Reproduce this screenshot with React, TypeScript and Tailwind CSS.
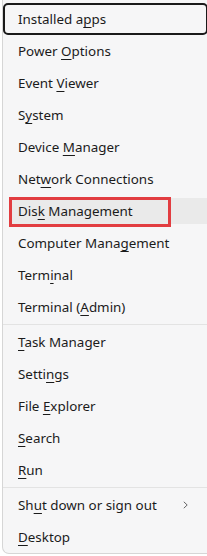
import type { ReactNode } from "react"

type Item = { pre: string; key: string; post: string; chevron?: boolean }

const groupA: Item[] = [
    { pre: "Installed a", key: "p", post: "ps" },
    { pre: "Power ", key: "O", post: "ptions" },
    { pre: "Event ", key: "V", post: "iewer" },
    { pre: "S", key: "y", post: "stem" },
    { pre: "Device ", key: "M", post: "anager" },
    { pre: "Net", key: "w", post: "ork Connections" },
    { pre: "Dis", key: "k", post: " Management" },
    { pre: "Computer Mana", key: "g", post: "ement" },
    { pre: "Term", key: "i", post: "nal" },
    { pre: "Terminal (", key: "A", post: "dmin)" },
]

const groupB: Item[] = [
    { pre: "", key: "T", post: "ask Manager" },
    { pre: "Setti", key: "n", post: "gs" },
    { pre: "File ", key: "E", post: "xplorer" },
    { pre: "", key: "S", post: "earch" },
    { pre: "", key: "R", post: "un" },
]

const groupC: Item[] = [
    { pre: "Sh", key: "u", post: "t down or sign out", chevron: true },
    { pre: "", key: "D", post: "esktop" },
]

function Label({ item }: { item: Item }) {
    return (
        <span className="whitespace-nowrap">
            {item.pre}
            <u className="underline decoration-1 underline-offset-[3px]">{item.key}</u>
            {item.post}
        </span>
    )
}

function Row({ item, focused, hovered }: { item: Item; focused?: boolean; hovered?: boolean }) {
    let inner: ReactNode = <Label item={item} />
    if (focused) {
        return (
            <div className="h-[32px] mr-[2px] flex items-center pl-[13px] rounded-[5px] border-2 border-[#1a1a1a]">
                {inner}
            </div>
        )
    }
    return (
        <div className="h-[32px] py-[3px] pl-[6px]">
            <div className={`h-full flex items-center pl-[9px] pr-[22px] rounded-[4px] ${hovered ? "bg-[#eaeaea]" : ""}`}>
                <span className="flex-1">{inner}</span>
                {item.chevron && (
                    <svg width="5" height="8" viewBox="0 0 5 8" className="text-[#666]">
                        <path d="M0.8 0.8 L4.2 4 L0.8 7.2" fill="none" stroke="currentColor" strokeWidth="1" />
                    </svg>
                )}
            </div>
        </div>
    )
}

function Separator() {
    return (
        <div className="h-[3px] flex flex-col justify-center">
            <div className="h-px bg-[#e3e3e3]" />
        </div>
    )
}

export default function App() {
    return (
        <div
            className="w-[207px] h-[556px] bg-white overflow-hidden relative text-[13.4px] text-[#1b1b1b]"
            style={{ fontFamily: '"Noto Sans", "Open Sans", sans-serif' }}
        >
            <div className="absolute right-0 top-0 w-[27px] h-[2px] bg-[#2a2a2a] rounded-tl-[2px]" />
            <div className="ml-[2px] w-[208px] h-[554px] bg-[#f6f6f7] border-l border-b border-[#d6d6d6] rounded-bl-[7px] pt-[3px] relative">
                {groupA.map((it, i) => (
                    <Row key={i} item={it} focused={i == 0} hovered={i == 6} />
                ))}
                <Separator />
                {groupB.map((it, i) => (
                    <Row key={i} item={it} />
                ))}
                <Separator />
                {groupC.map((it, i) => (
                    <Row key={i} item={it} />
                ))}
                {/* red annotation box */}
                <div className="absolute left-[6px] top-[197px] w-[162px] h-[30px] border-[3px] border-[#e23d41]" />
            </div>
        </div>
    )
}
